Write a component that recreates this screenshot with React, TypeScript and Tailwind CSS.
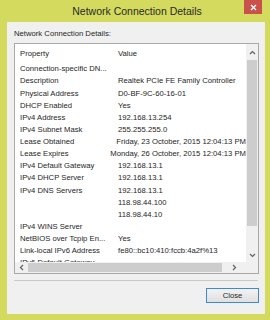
const rows: [string, string][] = [
  ['Connection-specific DN...', ''],
  ['Description', 'Realtek PCIe FE Family Controller'],
  ['Physical Address', 'D0-BF-9C-60-16-01'],
  ['DHCP Enabled', 'Yes'],
  ['IPv4 Address', '192.168.13.254'],
  ['IPv4 Subnet Mask', '255.255.255.0'],
  ['Lease Obtained', 'Friday, 23 October, 2015 12:04:13 PM'],
  ['Lease Expires', 'Monday, 26 October, 2015 12:04:13 PM'],
  ['IPv4 Default Gateway', '192.168.13.1'],
  ['IPv4 DHCP Server', '192.168.13.1'],
  ['IPv4 DNS Servers', '192.168.13.1'],
  ['', '118.98.44.100'],
  ['', '118.98.44.10'],
  ['IPv4 WINS Server', ''],
  ['NetBIOS over Tcpip En...', 'Yes'],
  ['Link-local IPv6 Address', 'fe80::bc10:410:fccb:4a2f%13'],
  ['IPv6 Default Gateway', ''],
];

export default function App() {
  return (
    <div
      className="w-[270px] h-[320px] bg-[#d3da5e] flex flex-col overflow-hidden text-[#262626]"
      style={{ fontFamily: '"Liberation Sans", Arial, sans-serif' }}
    >
      {/* Title bar */}
      <div className="h-[22px] flex items-start relative">
        <div className="flex-1 text-center text-[10.5px] leading-[22px] text-[#2a2a2a] pl-[4px]">
          Network Connection Details
        </div>
        <div className="absolute right-[8px] top-0 w-[18px] h-[14px] bg-[#c9504b] flex items-center justify-center">
          <svg width="7" height="7" viewBox="0 0 7 7" stroke="#fff" strokeWidth={1.4}>
            <path d="M1 1l5 5M6 1L1 6" />
          </svg>
        </div>
      </div>

      {/* Client area */}
      <div className="ml-[7px] w-[258px] h-[292px] bg-[#f0f0f0] flex flex-col px-[7px]">
        <div className="text-[7.7px] leading-[10px] mt-[7px] h-[14px]">Network Connection Details:</div>

        {/* List view */}
        <div className="w-[245px] h-[231px] bg-white border border-[#a9a9a9] flex flex-col">
          <div className="flex flex-1 min-h-0">
            <div className="flex-1 overflow-hidden text-[7.7px] whitespace-nowrap">
              <div className="h-[19px] flex items-center">
                <span className="w-[98px] pl-[5px]">Property</span>
                <span className="pl-[5px]">Value</span>
              </div>
              {rows.map((r, i) => (
                <div key={i} className="h-[12.13px] flex items-center">
                  <span className="w-[98px] pl-[5px] overflow-hidden">{r[0]}</span>
                  <span className="pl-[5px]">{r[1]}</span>
                </div>
              ))}
            </div>
            {/* Vertical scrollbar */}
            <div className="w-[12px] bg-[#f0f0f0] flex flex-col items-center">
              <div className="h-[16px] flex items-center justify-center text-[#606060]">
                <svg width="7" height="5" viewBox="0 0 7 5" fill="none" stroke="currentColor" strokeWidth={1.2}>
                  <path d="M1 4l2.5-2.5L6 4" />
                </svg>
              </div>
              <div className="w-[10px] h-[166px] bg-[#cdcdcd]" />
              <div className="flex-1" />
              <div className="h-[14px] flex items-center justify-center text-[#606060]">
                <svg width="7" height="5" viewBox="0 0 7 5" fill="none" stroke="currentColor" strokeWidth={1.2}>
                  <path d="M1 1l2.5 2.5L6 1" />
                </svg>
              </div>
            </div>
          </div>
          {/* Horizontal scrollbar */}
          <div className="h-[11px] flex bg-[#f0f0f0]">
            <div className="w-[12px] flex items-center justify-center text-[#606060]">
              <svg width="5" height="7" viewBox="0 0 5 7" fill="none" stroke="currentColor" strokeWidth={1.2}>
                <path d="M4 1L1.5 3.5L4 6" />
              </svg>
            </div>
            <div className="w-[194px] h-[9px] my-[1px] ml-[1px] bg-[#cdcdcd]" />
            <div className="flex-1 flex items-center justify-center text-[#606060]">
              <svg width="5" height="7" viewBox="0 0 5 7" fill="none" stroke="currentColor" strokeWidth={1.2}>
                <path d="M1 1l2.5 2.5L1 6" />
              </svg>
            </div>
            <div className="w-[12px] bg-[#f0f0f0]" />
          </div>
        </div>

        <div className="mt-[6px] h-[1px] bg-[#c8c8c8] w-[244px]" />

        <div className="flex justify-end mt-[7px] pr-[0px]">
          <button className="w-[53px] h-[15px] mr-[-1px] border border-[#3c8ad6] bg-gradient-to-b from-[#f2f2f2] to-[#e0e0e0] text-[7.7px] leading-none text-[#262626]">
            Close
          </button>
        </div>
      </div>
    </div>
  );
}
